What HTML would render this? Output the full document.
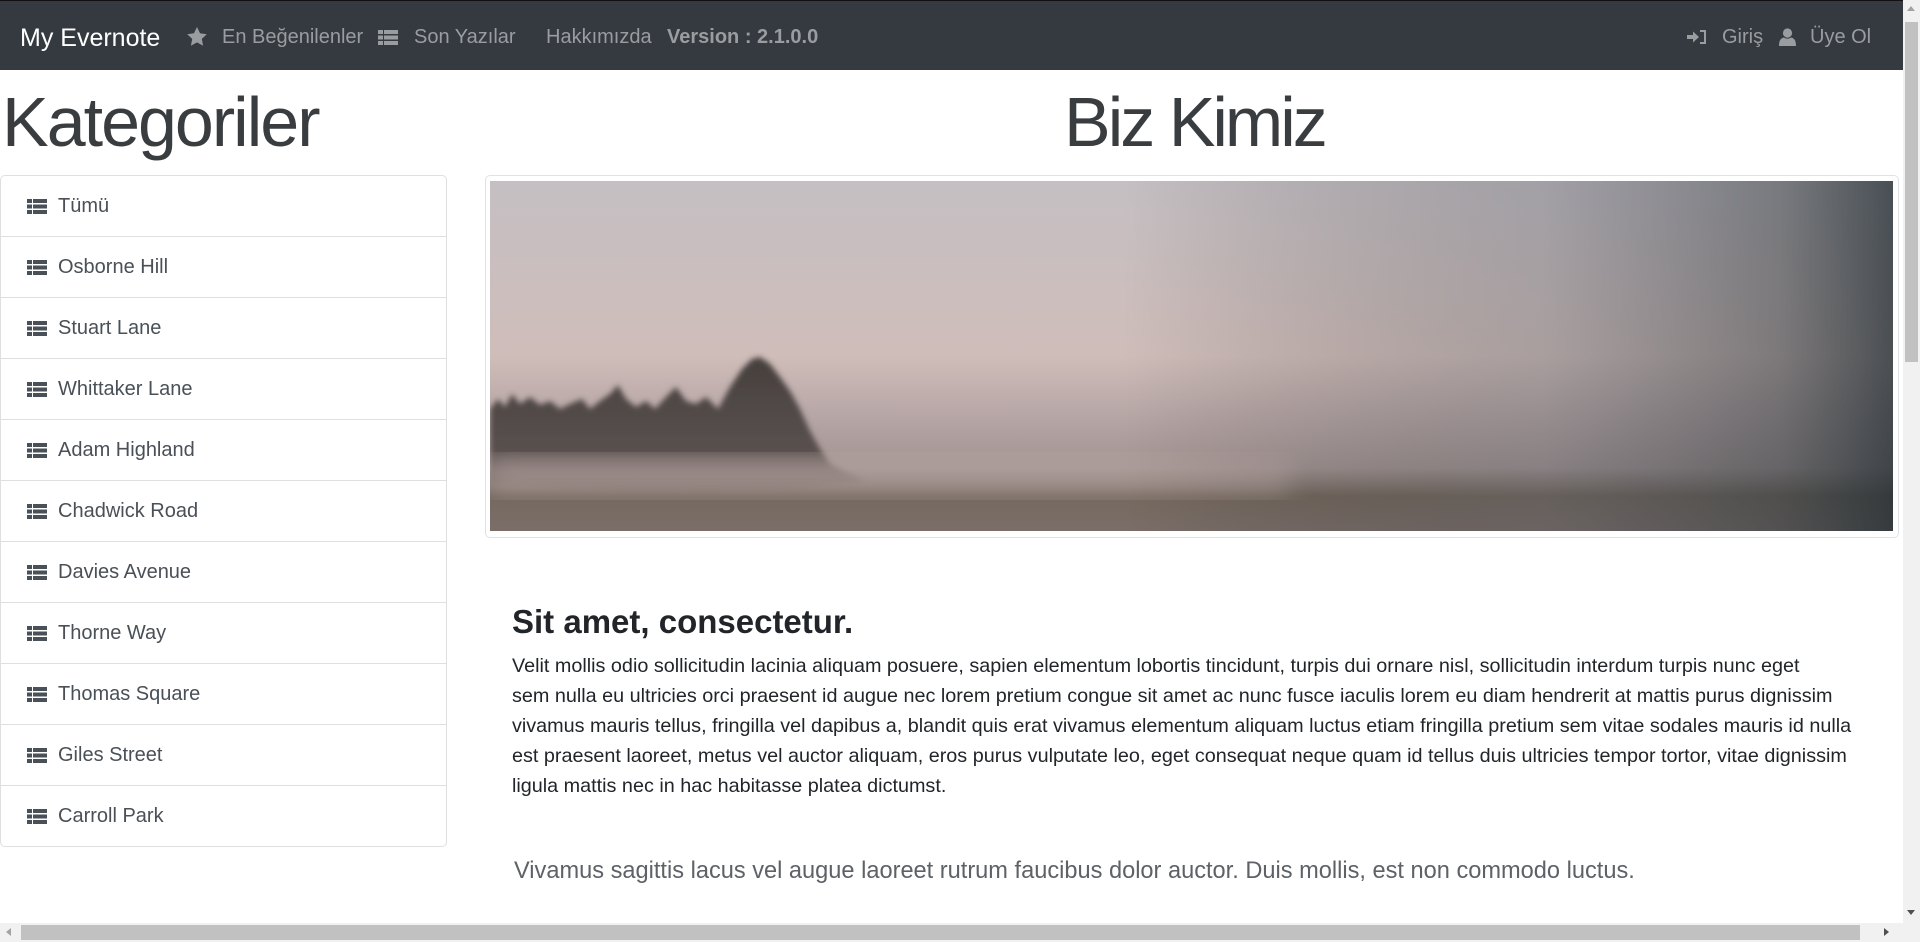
<!DOCTYPE html>
<html><head><meta charset="utf-8">
<style>
*{margin:0;padding:0;box-sizing:border-box}
html,body{width:1920px;height:942px;overflow:hidden;background:#fff;font-family:"Liberation Sans",sans-serif;color:#212529}
.a{position:absolute;white-space:nowrap}
#nav{position:absolute;left:0;top:0;width:1903px;height:70px;background:#343a40;border-top:1px solid #111}
.n{position:absolute;top:26px;font-size:20px;line-height:20px;color:#9a9da0;white-space:nowrap}
.list{position:absolute;left:0;top:175px;width:447px;border:1px solid #dfdfdf;border-radius:5px}
.it{height:61px;border-top:1px solid #dfdfdf;font-size:20px;line-height:60px;color:#495057;padding-left:57px;position:relative}
.it:first-child{border-top:none;height:60px}
.it svg{position:absolute;left:26px;top:23px}
</style></head><body>
<div id="nav">
 <div class="n" style="left:20px;top:25px;font-size:25px;line-height:25px;color:#fff">My Evernote</div>
 <svg class="a" style="left:187px;top:26px" width="20" height="19" viewBox="0 0 20 19"><path d="M10 0l3 6.3 6.8.9-5 4.7 1.3 6.8L10 15.4 3.9 18.7l1.3-6.8-5-4.7 6.8-.9z" fill="#9a9da0"/></svg>
 <div class="n" style="left:222px">En Beğenilenler</div>
 <svg class="a" style="left:378px;top:29px" width="20" height="15"><g fill="#9a9da0"><rect x="0" y="0" width="5" height="4"/><rect x="6" y="0" width="14" height="4"/><rect x="0" y="5.5" width="5" height="4"/><rect x="6" y="5.5" width="14" height="4"/><rect x="0" y="11" width="5" height="4"/><rect x="6" y="11" width="14" height="4"/></g></svg>
 <div class="n" style="left:414px">Son Yazılar</div>
 <div class="n" style="left:546px">Hakkımızda</div>
 <div class="n" style="left:667px;font-weight:bold">Version : 2.1.0.0</div>
 <svg class="a" style="left:1687px;top:29px" width="20" height="14" viewBox="0 0 20 14"><path d="M0 5h6V1.5L12 7l-6 5.5V9H0z" fill="#9a9da0"/><path d="M13 1h5v12h-5" fill="none" stroke="#9a9da0" stroke-width="2"/></svg>
 <div class="n" style="left:1722px">Giriş</div>
 <svg class="a" style="left:1779px;top:27px" width="17" height="18" viewBox="0 0 17 18"><circle cx="8.5" cy="5" r="4.6" fill="#9a9da0"/><path d="M0 18c0-6 2-8 5-8.5 2 1.5 5 1.5 7 0 3 .5 5 2.5 5 8.5z" fill="#9a9da0"/></svg>
 <div class="n" style="left:1810px">Üye Ol</div>
</div>

<div class="a" style="left:2px;top:87px;font-size:70px;line-height:70px;font-weight:300;letter-spacing:-2px;color:#3a3d40">Kategoriler</div>
<div class="a" style="left:1064px;top:87px;font-size:70px;line-height:70px;font-weight:300;letter-spacing:-3px;color:#3a3d40">Biz Kimiz</div>

<div class="list">
 <div class="it"><svg width="20" height="15"><g fill="#495057"><rect width="5" height="4"/><rect x="6" width="14" height="4"/><rect y="5.5" width="5" height="4"/><rect x="6" y="5.5" width="14" height="4"/><rect y="11" width="5" height="4"/><rect x="6" y="11" width="14" height="4"/></g></svg>Tümü</div>
 <div class="it"><svg width="20" height="15"><g fill="#495057"><rect width="5" height="4"/><rect x="6" width="14" height="4"/><rect y="5.5" width="5" height="4"/><rect x="6" y="5.5" width="14" height="4"/><rect y="11" width="5" height="4"/><rect x="6" y="11" width="14" height="4"/></g></svg>Osborne Hill</div>
 <div class="it"><svg width="20" height="15"><g fill="#495057"><rect width="5" height="4"/><rect x="6" width="14" height="4"/><rect y="5.5" width="5" height="4"/><rect x="6" y="5.5" width="14" height="4"/><rect y="11" width="5" height="4"/><rect x="6" y="11" width="14" height="4"/></g></svg>Stuart Lane</div>
 <div class="it"><svg width="20" height="15"><g fill="#495057"><rect width="5" height="4"/><rect x="6" width="14" height="4"/><rect y="5.5" width="5" height="4"/><rect x="6" y="5.5" width="14" height="4"/><rect y="11" width="5" height="4"/><rect x="6" y="11" width="14" height="4"/></g></svg>Whittaker Lane</div>
 <div class="it"><svg width="20" height="15"><g fill="#495057"><rect width="5" height="4"/><rect x="6" width="14" height="4"/><rect y="5.5" width="5" height="4"/><rect x="6" y="5.5" width="14" height="4"/><rect y="11" width="5" height="4"/><rect x="6" y="11" width="14" height="4"/></g></svg>Adam Highland</div>
 <div class="it"><svg width="20" height="15"><g fill="#495057"><rect width="5" height="4"/><rect x="6" width="14" height="4"/><rect y="5.5" width="5" height="4"/><rect x="6" y="5.5" width="14" height="4"/><rect y="11" width="5" height="4"/><rect x="6" y="11" width="14" height="4"/></g></svg>Chadwick Road</div>
 <div class="it"><svg width="20" height="15"><g fill="#495057"><rect width="5" height="4"/><rect x="6" width="14" height="4"/><rect y="5.5" width="5" height="4"/><rect x="6" y="5.5" width="14" height="4"/><rect y="11" width="5" height="4"/><rect x="6" y="11" width="14" height="4"/></g></svg>Davies Avenue</div>
 <div class="it"><svg width="20" height="15"><g fill="#495057"><rect width="5" height="4"/><rect x="6" width="14" height="4"/><rect y="5.5" width="5" height="4"/><rect x="6" y="5.5" width="14" height="4"/><rect y="11" width="5" height="4"/><rect x="6" y="11" width="14" height="4"/></g></svg>Thorne Way</div>
 <div class="it"><svg width="20" height="15"><g fill="#495057"><rect width="5" height="4"/><rect x="6" width="14" height="4"/><rect y="5.5" width="5" height="4"/><rect x="6" y="5.5" width="14" height="4"/><rect y="11" width="5" height="4"/><rect x="6" y="11" width="14" height="4"/></g></svg>Thomas Square</div>
 <div class="it"><svg width="20" height="15"><g fill="#495057"><rect width="5" height="4"/><rect x="6" width="14" height="4"/><rect y="5.5" width="5" height="4"/><rect x="6" y="5.5" width="14" height="4"/><rect y="11" width="5" height="4"/><rect x="6" y="11" width="14" height="4"/></g></svg>Giles Street</div>
 <div class="it"><svg width="20" height="15"><g fill="#495057"><rect width="5" height="4"/><rect x="6" width="14" height="4"/><rect y="5.5" width="5" height="4"/><rect x="6" y="5.5" width="14" height="4"/><rect y="11" width="5" height="4"/><rect x="6" y="11" width="14" height="4"/></g></svg>Carroll Park</div>
</div>

<div class="a" style="left:485px;top:175px;width:1414px;height:363px;border:1px solid #dee2e6;border-radius:5px;background:#fff"></div>
<svg class="a" style="left:490px;top:181px" width="1403" height="350" viewBox="0 0 1403 350" preserveAspectRatio="none">
 <defs>
  <linearGradient id="v" x1="0" y1="0" x2="0" y2="1">
   <stop offset="0" stop-color="#c5bfc3"/><stop offset="0.5" stop-color="#cfbdb9"/><stop offset="0.68" stop-color="#b5a5a4"/><stop offset="0.82" stop-color="#a29492"/><stop offset="0.9" stop-color="#75695f"/><stop offset="1" stop-color="#7b6e69"/>
  </linearGradient>
  <linearGradient id="h" x1="0" y1="0" x2="1" y2="0">
   <stop offset="0" stop-color="#000" stop-opacity="0"/><stop offset="0.45" stop-color="#000" stop-opacity="0"/><stop offset="0.75" stop-color="#3a4450" stop-opacity="0.25"/><stop offset="0.92" stop-color="#2a343a" stop-opacity="0.5"/><stop offset="1" stop-color="#1e2a30" stop-opacity="0.75"/>
  </linearGradient>
  <linearGradient id="t" x1="0" y1="0" x2="0" y2="1"><stop offset="0" stop-color="#3e3836" stop-opacity="0.95"/><stop offset="0.7" stop-color="#4a4240" stop-opacity="0.85"/><stop offset="1" stop-color="#6a5e5c" stop-opacity="0.2"/></linearGradient>
  <filter id="b"><feGaussianBlur stdDeviation="3"/></filter>
  <filter id="b2"><feGaussianBlur stdDeviation="12"/></filter>
 </defs>
 <rect width="1403" height="350" fill="url(#v)"/>
 <g filter="url(#b)" transform="translate(0,28)">
 <path d="M0 275 L0 200 8 190 15 198 22 185 30 195 40 188 50 196 60 192 70 200 80 195 92 190 100 200 110 192 120 185 128 176 136 190 146 198 156 192 165 200 176 188 186 178 196 192 206 195 216 188 228 200 240 178 252 160 262 150 270 148 280 155 290 168 300 182 310 200 320 222 330 240 340 255 360 265 375 272 300 280 150 282 Z" fill="url(#t)"/>
 </g>
 <rect x="0" y="275" width="800" height="40" fill="#bba8a5" opacity="0.45" filter="url(#b2)"/>
 <rect width="1403" height="350" fill="url(#h)"/>
</svg>

<div class="a" style="left:512px;top:605px;font-size:33px;line-height:33px;font-weight:bold;color:#212529">Sit amet, consectetur.</div>
<div class="a" style="left:512px;top:651px;font-size:19.8px;line-height:30px;color:#212529">Velit mollis odio sollicitudin lacinia aliquam posuere, sapien elementum lobortis tincidunt, turpis dui ornare nisl, sollicitudin interdum turpis nunc eget<br>sem nulla eu ultricies orci praesent id augue nec lorem pretium congue sit amet ac nunc fusce iaculis lorem eu diam hendrerit at mattis purus dignissim<br>vivamus mauris tellus, fringilla vel dapibus a, blandit quis erat vivamus elementum aliquam luctus etiam fringilla pretium sem vitae sodales mauris id nulla<br>est praesent laoreet, metus vel auctor aliquam, eros purus vulputate leo, eget consequat neque quam id tellus duis ultricies tempor tortor, vitae dignissim<br>ligula mattis nec in hac habitasse platea dictumst.</div>
<div class="a" style="left:514px;top:859px;font-size:23.6px;line-height:25px;font-weight:300;color:#5d6268">Vivamus sagittis lacus vel augue laoreet rutrum faucibus dolor auctor. Duis mollis, est non commodo luctus.</div>

<div class="a" style="left:1903px;top:0;width:17px;height:923px;background:#f1f1f1"></div>
<div class="a" style="left:1905px;top:22px;width:13px;height:340px;background:#c1c1c1"></div>
<div class="a" style="left:1907px;top:6px;width:0;height:0;border-left:4px solid transparent;border-right:4px solid transparent;border-bottom:5px solid #a3a3a3"></div>
<div class="a" style="left:1907px;top:910px;width:0;height:0;border-left:4px solid transparent;border-right:4px solid transparent;border-top:5px solid #505050"></div>
<div class="a" style="left:0;top:923px;width:1920px;height:19px;background:#f1f1f1"></div>
<div class="a" style="left:21px;top:925px;width:1839px;height:15px;background:#c1c1c1"></div>
<div class="a" style="left:6px;top:928px;width:0;height:0;border-top:4px solid transparent;border-bottom:4px solid transparent;border-right:5px solid #a3a3a3"></div>
<div class="a" style="left:1884px;top:928px;width:0;height:0;border-top:4px solid transparent;border-bottom:4px solid transparent;border-left:5px solid #505050"></div>
</body></html>
